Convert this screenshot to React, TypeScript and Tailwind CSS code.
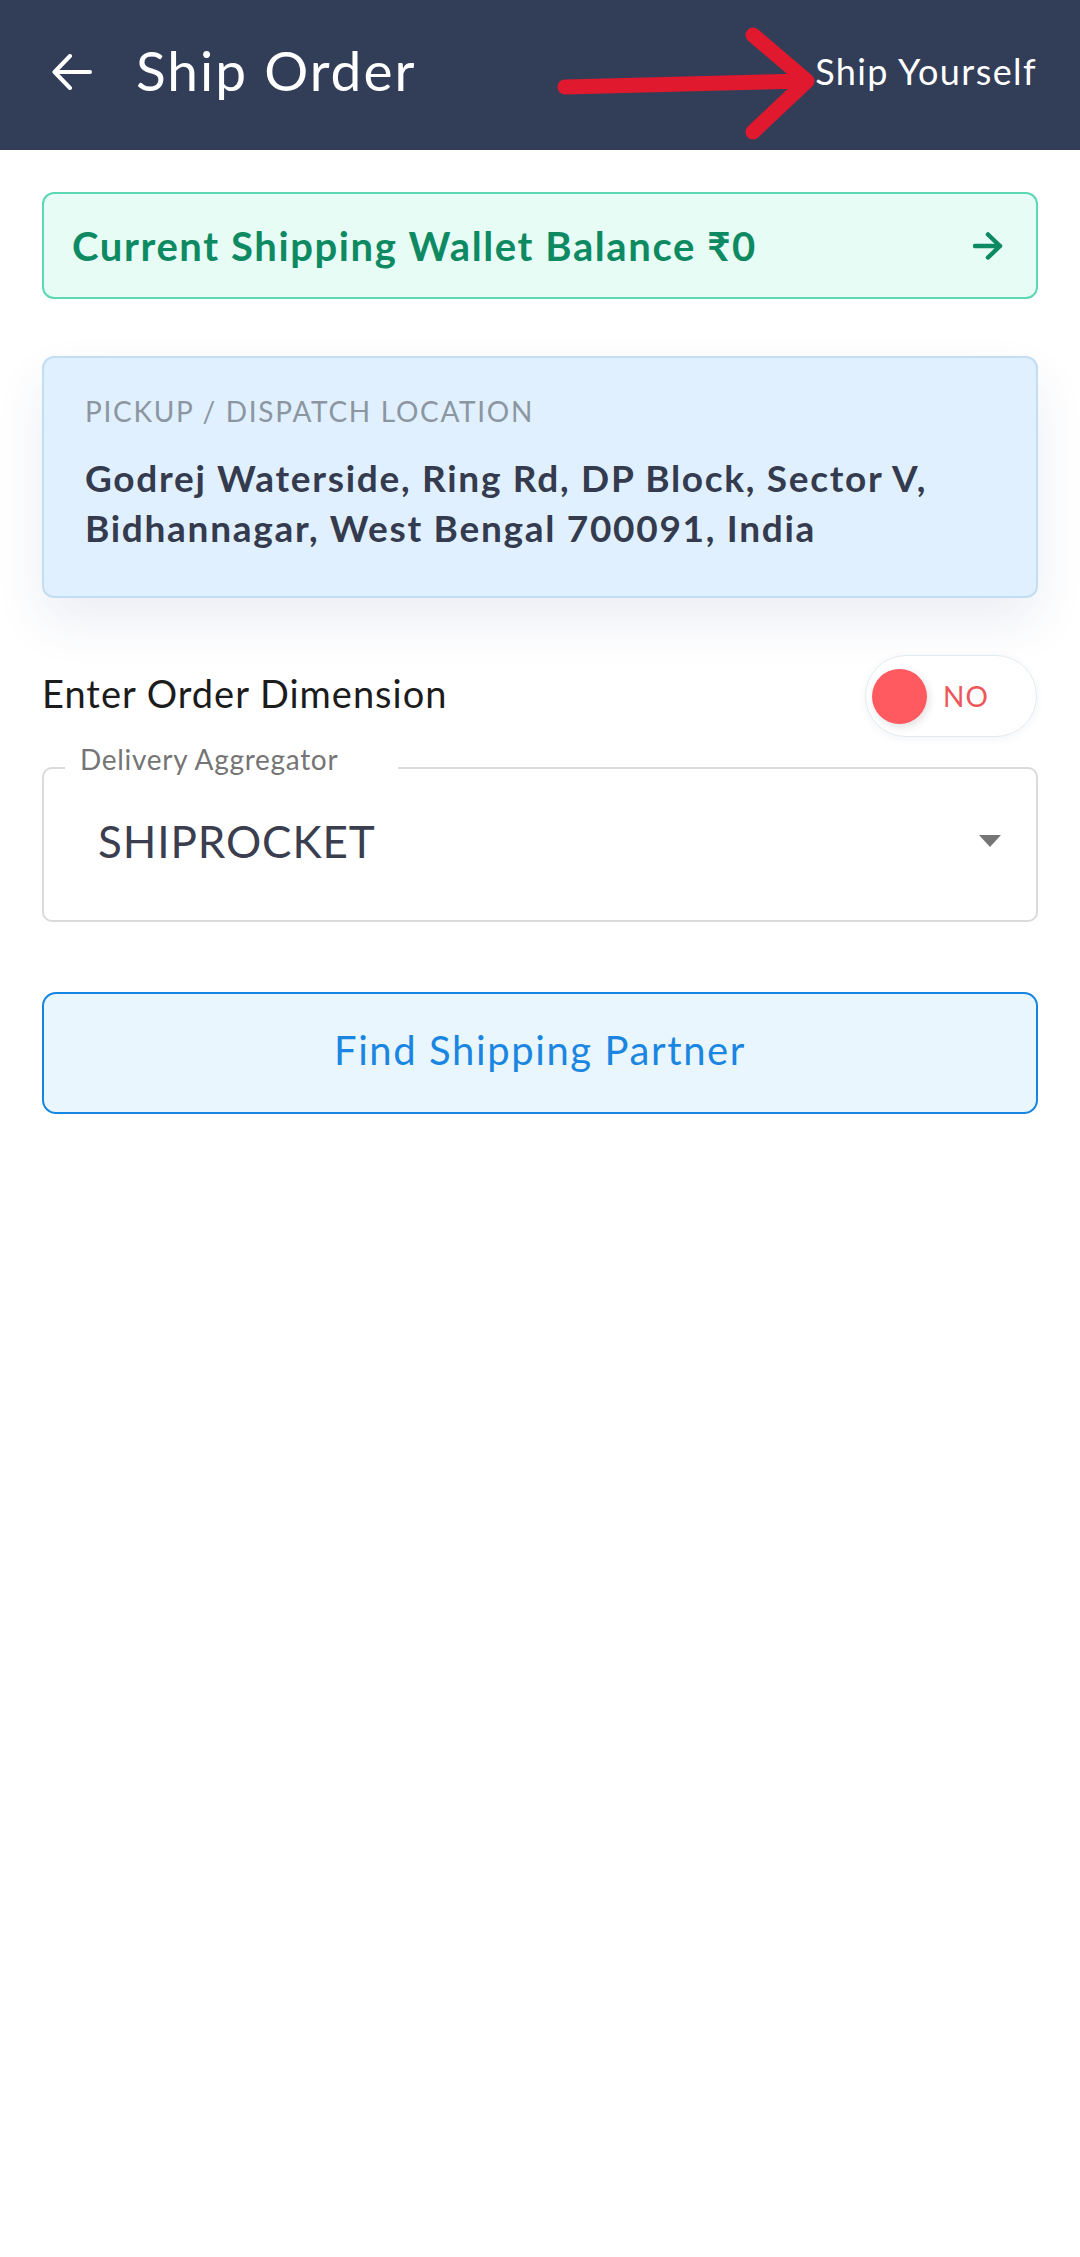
import React from "react";

const font = { fontFamily: "Lato, 'Noto Sans', sans-serif" };

function BackArrow() {
  return (
    <svg width="40" height="36" viewBox="0 0 40 36" fill="none">
      <path d="M38 18H3M18 2L2.5 18L18 34" stroke="white" strokeWidth="4" strokeLinecap="round" strokeLinejoin="round" />
    </svg>
  );
}

function RedArrow() {
  return (
    <svg className="absolute left-[555px] top-[25px]" width="270" height="120" viewBox="0 0 270 120" fill="none">
      <path d="M10 62 L250 56" stroke="#e0192e" strokeWidth="15" strokeLinecap="round" />
      <path d="M198 10 L252 56 L198 107" stroke="#e0192e" strokeWidth="15" strokeLinecap="round" strokeLinejoin="round" />
    </svg>
  );
}

export default function App() {
  return (
    <div className="min-h-[2257px] w-[1080px] bg-white" style={font}>
      <header className="relative flex h-[150px] items-center bg-[#323d58] pb-[10px] pl-[52px] pr-[43px]">
        <div className="pt-[4px]">
          <BackArrow />
        </div>
        <h1 className="ml-[44px] text-[55px] leading-none tracking-[2px] text-white">Ship Order</h1>
        <RedArrow />
        <div className="ml-auto pt-[2px] text-[36px] leading-none tracking-[1.4px] text-white">Ship Yourself</div>
      </header>

      <main className="px-[42px] pt-[42px]">
        <div className="flex h-[107px] items-center justify-between rounded-[12px] border-2 border-[#5cd8b3] bg-[#e6fcf5] pl-[28px] pr-[33px]">
          <span className="text-[40px] font-bold leading-none tracking-[1.6px] text-[#0d8a62]">Current Shipping Wallet Balance ₹0</span>
          <svg width="30" height="28" viewBox="0 0 30 28" fill="none">
            <path d="M2 14H27M15 2.5L27 14L15 25.5" stroke="#0d8a62" strokeWidth="4.5" strokeLinecap="round" strokeLinejoin="round" />
          </svg>
        </div>

        <div className="mt-[57px] h-[242px] rounded-[12px] border-2 border-[#c3ddf3] bg-[#e0f0fe] px-[41px] pt-[39px] shadow-[0_24px_50px_rgba(40,70,130,0.09)]">
          <div className="text-[28px] leading-[28px] tracking-[1.7px] text-[#8b96a1]">PICKUP / DISPATCH LOCATION</div>
          <div className="mt-[28px] whitespace-nowrap text-[37px] font-bold leading-[50px] tracking-[1.7px] text-[#353b4e]">
            Godrej Waterside, Ring Rd, DP Block, Sector V,
            <br />
            Bidhannagar, West Bengal 700091, India
          </div>
        </div>

        <div className="mt-[57px] flex h-[82px] items-center justify-between">
          <span className="pb-[6px] text-[38px] leading-none tracking-[1px] text-[#1c1c1c]">Enter Order Dimension</span>
          <div className="mr-[1px] flex h-[82px] w-[172px] items-center rounded-full border border-[#e4ebf2] bg-white pl-[6px] shadow-[0_2px_8px_rgba(40,70,130,0.06)]">
            <div className="h-[55px] w-[55px] rounded-full bg-[#ff5a5f] shadow-[2px_3px_8px_rgba(0,0,0,0.12)]" />
            <span className="ml-[16px] text-[28px] leading-none tracking-[1px] text-[#ef5659]">NO</span>
          </div>
        </div>

        <div className="relative mt-[30px] flex h-[155px] items-center justify-between rounded-[10px] border-2 border-[#dadada] pb-[8px] pl-[54px] pr-[35px]">
          <span className="absolute left-[21px] top-[-24px] bg-white pl-[15px] pr-[60px] text-[28px] leading-[28px] tracking-[0.7px] text-[#757575]">
            Delivery Aggregator
          </span>
          <span className="text-[44px] leading-none tracking-[0.9px] text-[#3a3e4e]">SHIPROCKET</span>
          <svg width="22" height="12" viewBox="0 0 22 12">
            <path d="M0 0H22L11 12Z" fill="#757575" />
          </svg>
        </div>

        <button className="mt-[70px] flex h-[122px] w-full items-center justify-center rounded-[14px] border-2 border-[#1786e0] bg-[#e9f6fd] pb-[6px] text-[40px] leading-none tracking-[1.6px] text-[#1a86e1]">
          Find Shipping Partner
        </button>
      </main>
    </div>
  );
}
